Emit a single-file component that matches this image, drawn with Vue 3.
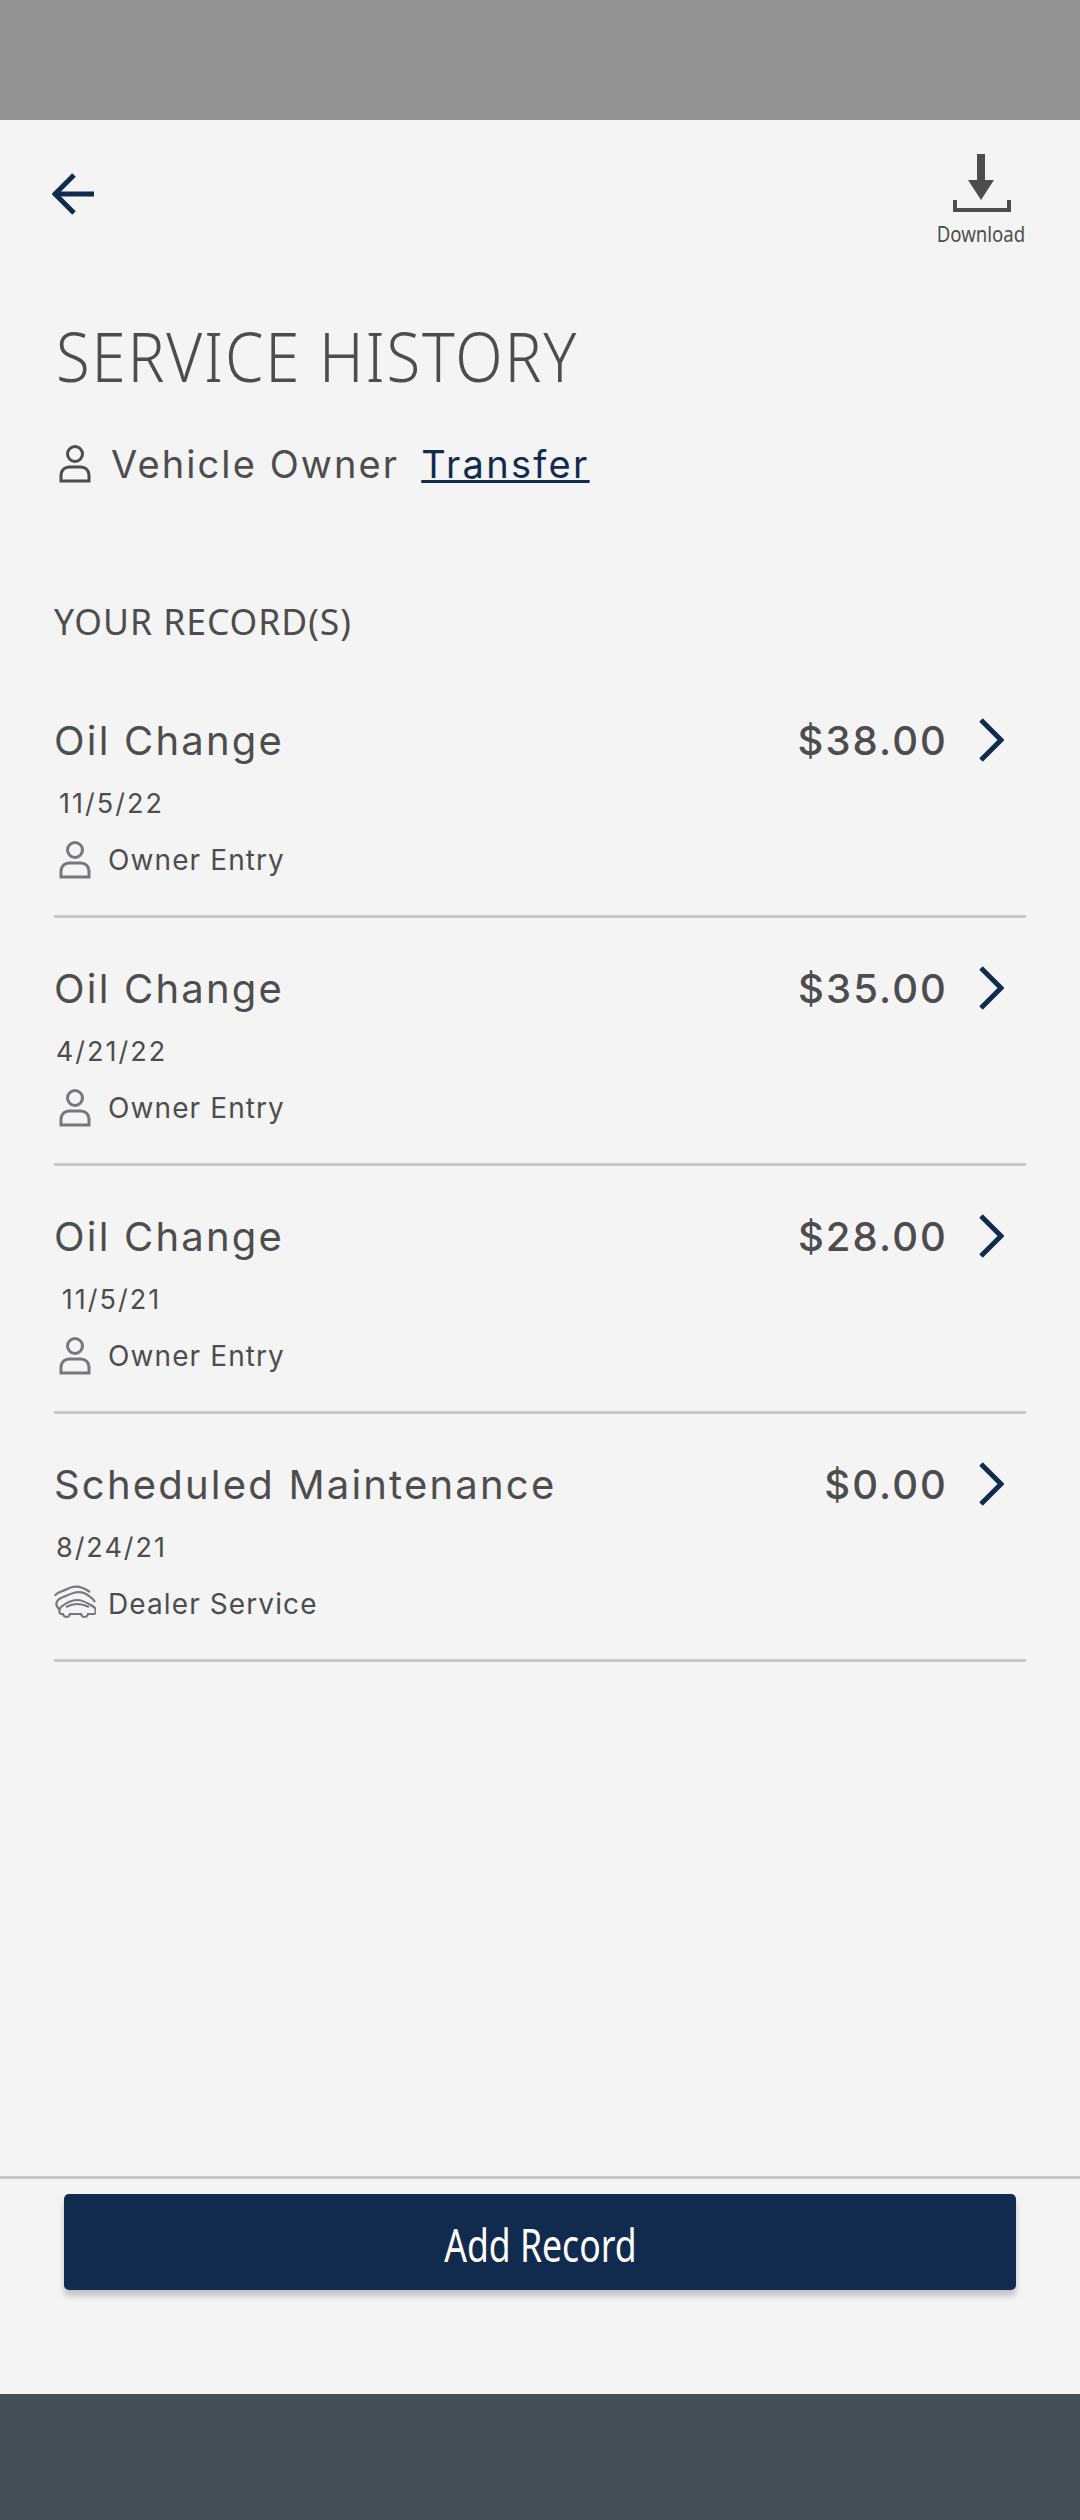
<script setup>
const records = [
  { id: 1, title: 'Oil Change', price: '$38.00', date: '11/5/22', source: 'Owner Entry', icon: 'person' },
  { id: 2, title: 'Oil Change', price: '$35.00', date: '4/21/22', source: 'Owner Entry', icon: 'person' },
  { id: 3, title: 'Oil Change', price: '$28.00', date: '11/5/21', source: 'Owner Entry', icon: 'person' },
  { id: 4, title: 'Scheduled Maintenance', price: '$0.00', date: '8/24/21', source: 'Dealer Service', icon: 'car' }
]
</script>

<template>
  <div class="screen">
    <div class="status-bar"></div>
    <main class="content">
      <header class="top">
        <svg class="back" width="44" height="42" viewBox="0 0 44 42" fill="none" stroke="#112b4f" stroke-width="5">
          <path d="M42 21H4" />
          <path d="M22 2L3 21l19 19" />
        </svg>
        <div class="download">
          <svg width="60" height="60" viewBox="0 0 60 60" fill="#4d4d4d">
            <path d="M26 0h8v26h9L30 46 17 26h9z" />
            <path d="M2 46h4v8h50v-8h4v12H2z" />
          </svg>
          <span>Download</span>
        </div>
      </header>

      <h1><span>SERVICE HISTORY</span></h1>

      <div class="owner">
        <svg class="person" width="32" height="38" viewBox="0 0 32 38" fill="none" stroke="#4d4d4d" stroke-width="3">
          <circle cx="16" cy="9" r="7.5" />
          <path d="M2 36V30c0-5 4-8 8-8h12c4 0 8 3 8 8v6z" />
        </svg>
        <span class="owner-label">Vehicle Owner</span>
        <a class="transfer">Transfer</a>
      </div>

      <h2><span>YOUR RECORD(S)</span></h2>

      <ul class="records">
        <li v-for="item in records" :key="item.id" class="record">
          <div class="record-head">
            <span class="record-title">{{ item.title }}</span>
            <span class="record-price">{{ item.price }}</span>
            <svg class="chevron" width="26" height="44" viewBox="0 0 26 44" fill="none" stroke="#112b4f" stroke-width="5">
              <path d="M3 2l20 20L3 42" />
            </svg>
          </div>
          <div class="record-date"><span>{{ item.date }}</span></div>
          <div class="record-source">
            <svg v-if="item.icon === 'person'" class="source-icon" width="42" height="38" viewBox="0 0 42 38" fill="none" stroke="#77787b" stroke-width="3">
              <circle cx="21" cy="9" r="7.5" />
              <path d="M7 36V30c0-5 4-8 8-8h12c4 0 8 3 8 8v6z" />
            </svg>
            <svg v-else class="source-icon" width="42" height="38" viewBox="0 0 42 38" fill="none" stroke="#77787b" stroke-width="2.2">
              <path d="M1 11C2 7 8 7 13 4C20 0 28 1 36 7" />
              <path d="M6 25C1 21 1 16 7 13C15 10 22 5 30 8C34 10 38 12 41 17" />
              <path d="M6 29C5 26 5 24 7 22C12 18 18 15 23 15C30 15 35 19 40 22C42 24 42 27 41 29" />
              <path d="M6 29h3c1 4 6 4 7 0h11c1 4 6 4 7 0h7" />
              <path d="M12 22C16 20 20 19 23 19C27 19 31 20 35 22" />
            </svg>
            <span>{{ item.source }}</span>
          </div>
        </li>
      </ul>
    </main>

    <footer class="actions">
      <button type="button"><span>Add Record</span></button>
    </footer>
    <div class="nav-bar"></div>
  </div>
</template>

<style scoped>
.screen {
  width: 1080px;
  height: 2520px;
  display: flex;
  flex-direction: column;
  background: #f4f4f4;
  color: #4d4d4d;
  font-family: "Inter", "Liberation Sans", sans-serif;
  overflow: hidden;
}
.status-bar {
  height: 120px;
  background: #939393;
}
.content {
  flex: 1;
  padding: 34px 54px 0;
}
.top {
  display: flex;
  justify-content: space-between;
  align-items: flex-start;
}
.back {
  margin-top: 19px;
  margin-left: -2px;
}
.download {
  display: flex;
  flex-direction: column;
  align-items: center;
  width: 90px;
}
.download svg {
  margin-bottom: 7px;
}
.download span {
  display: inline-block;
  font-family: "Noto Sans", sans-serif;
  font-size: 21px;
  line-height: 26px;
  white-space: nowrap;
  transform: scaleX(0.887);
}
h1 {
  margin: 71px 0 0 2px;
  font-family: "Noto Sans", sans-serif;
  font-size: 68px;
  line-height: 76px;
  font-weight: 300;
  letter-spacing: 2px;
}
h1 span {
  display: inline-block;
  transform: scaleX(0.907);
  transform-origin: left center;
}
.owner {
  display: flex;
  align-items: center;
  margin-top: 48px;
  height: 44px;
}
.person {
  margin-left: 5px;
  margin-right: 20px;
}
.owner-label {
  font-size: 38px;
  letter-spacing: 2.1px;
}
.transfer {
  margin-left: 22px;
  font-size: 38px;
  letter-spacing: 2.3px;
  color: #112b4f;
  text-decoration: underline;
}
h2 {
  margin: 114px 0 0;
  font-family: "Noto Sans", sans-serif;
  font-size: 36px;
  line-height: 44px;
  font-weight: 400;
  letter-spacing: 1px;
}
h2 span {
  display: inline-block;
  transform: scaleX(0.985);
  transform-origin: left center;
}
.records {
  list-style: none;
  margin: 26px 0 0;
  padding: 0;
}
.record {
  height: 248px;
  border-bottom: 3px solid #c8c8c8;
  box-sizing: border-box;
  padding-top: 48px;
}
.record-head {
  display: flex;
  align-items: center;
  height: 44px;
}
.record-title {
  flex: 1;
  font-size: 40px;
  letter-spacing: 2.2px;
}
.record-price {
  font-size: 40px;
  font-weight: 500;
  letter-spacing: 2.1px;
}
.chevron {
  margin-left: 30px;
  margin-right: 22px;
}
.record-date {
  margin-top: 25px;
  width: 115px;
  text-align: center;
  font-size: 27px;
  line-height: 34px;
  letter-spacing: 2px;
  white-space: nowrap;
}
.record-source {
  display: flex;
  align-items: center;
  margin-top: 20px;
  font-size: 28px;
  letter-spacing: 1.1px;
}
.source-icon {
  margin-right: 12px;
}
.actions {
  height: 218px;
  box-sizing: border-box;
  border-top: 3px solid #c8c8c8;
  padding: 15px 64px 0;
}
button {
  display: block;
  width: 100%;
  height: 96px;
  padding: 4px 0 0;
  border: 0;
  border-radius: 5px;
  background: #112b4f;
  color: #fff;
  font-family: "Noto Sans", sans-serif;
  font-size: 46px;
  box-shadow: 0 6px 6px rgba(0, 0, 0, 0.2);
}
button span {
  display: inline-block;
  transform: scaleX(0.773);
}
.nav-bar {
  height: 126px;
  background: #454d55;
}
</style>
